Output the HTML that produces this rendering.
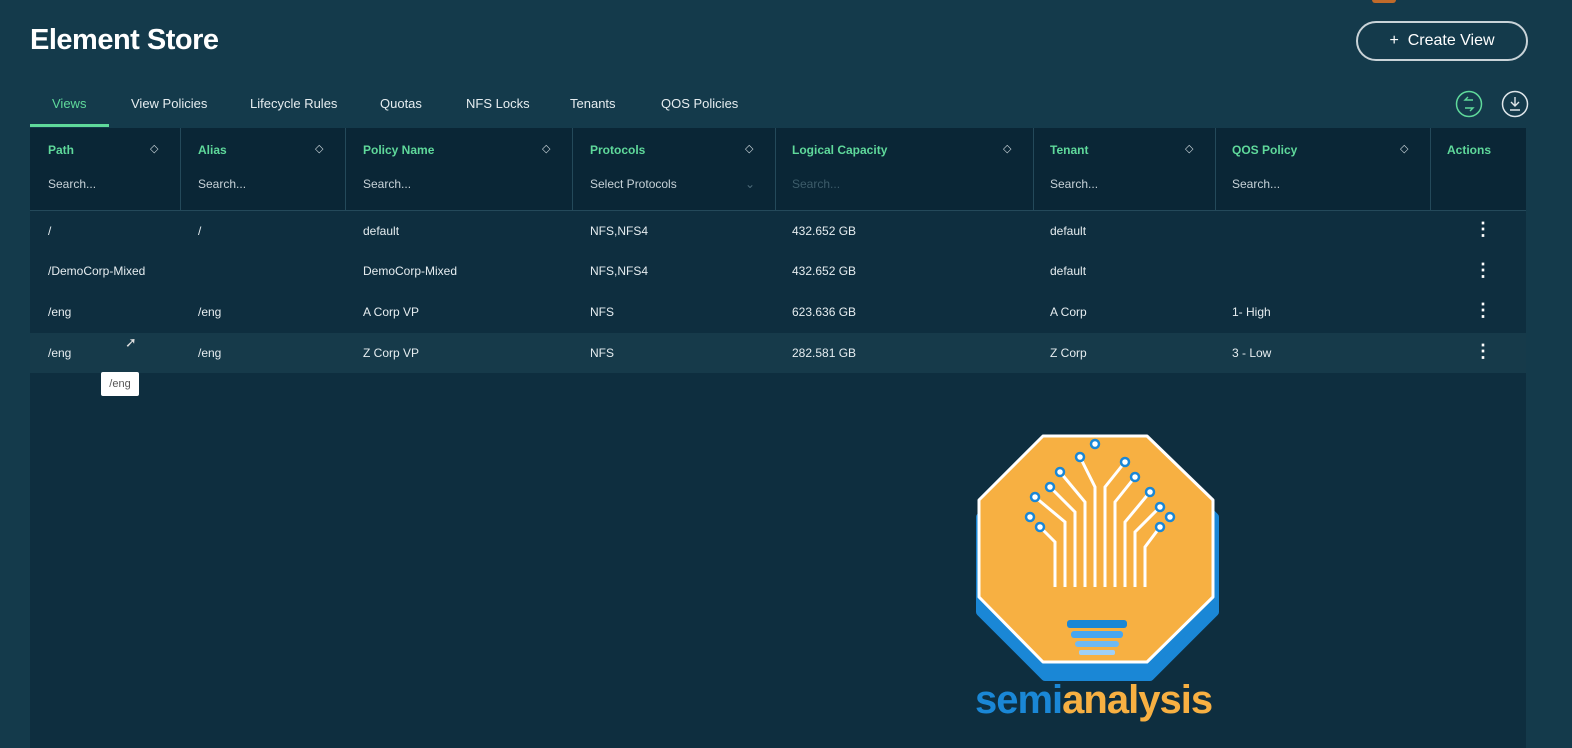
<!DOCTYPE html>
<html><head><style>
body{margin:0;width:1572px;height:746px;overflow:hidden;background:#143a4b;font-family:"Liberation Sans",sans-serif;position:relative;color:#e6edf0}
.abs{position:absolute}
h1{position:absolute;left:30px;top:24px;margin:0;font-size:29px;font-weight:bold;color:#fff;letter-spacing:-0.5px}
.btn{left:1356px;top:21px;width:168px;height:36px;border:2px solid #c9d3d8;border-radius:20px;font-size:16px;color:#fff;text-align:center;line-height:36px}
.tab{top:96px;font-size:13px;color:#e6edf0}
.table{left:30px;top:128px;width:1496px;height:620px;background:#0e2e3f}
.hdr{left:30px;top:128px;width:1496px;height:82px;background:#0a2636;border-bottom:1px solid #24495a}
.col{top:128px;height:82px;border-left:1px solid #24495a}
.ht{top:143px;font-size:12px;font-weight:bold;color:#5fd99b}
.sr{top:177px;font-size:12px;color:#c7d2d8}
.sort{top:142px;font-size:11px;color:#c7d2d8}
.cell{font-size:12px;color:#e6edf0}
.dot{font-size:18px;font-weight:bold;color:#fff}
</style></head><body>
<div class="abs" style="left:1372px;top:0;width:24px;height:3px;background:#c06a2a;border-radius:0 0 4px 4px"></div>
<h1>Element Store</h1>
<div class="abs btn">+&nbsp;&nbsp;Create View</div>
<div class="abs tab" style="left:52px;color:#5fd99b">Views</div>
<div class="abs" style="left:30px;top:124px;width:79px;height:3px;background:#5fd99b"></div>
<div class="abs tab" style="left:131px">View Policies</div>
<div class="abs tab" style="left:250px">Lifecycle Rules</div>
<div class="abs tab" style="left:380px">Quotas</div>
<div class="abs tab" style="left:466px">NFS Locks</div>
<div class="abs tab" style="left:570px">Tenants</div>
<div class="abs tab" style="left:661px">QOS Policies</div>
<svg class="abs" style="left:1454px;top:89px" width="30" height="30"><circle cx="15" cy="15" r="12.5" fill="none" stroke="#5fd99b" stroke-width="1.5"/><path d="M19 11H11l3-3M11 19h8l-3 3" fill="none" stroke="#5fd99b" stroke-width="1.4"/></svg>
<svg class="abs" style="left:1500px;top:89px" width="30" height="30"><circle cx="15" cy="15" r="12.5" fill="none" stroke="#dfe6ea" stroke-width="1.5"/><path d="M15 8v9M11 13l4 4 4-4M10 21h10" fill="none" stroke="#dfe6ea" stroke-width="1.4"/></svg>
<div class="abs table"></div>
<div class="abs hdr"></div>
<div class="abs col" style="left:180px"></div><div class="abs col" style="left:345px"></div><div class="abs col" style="left:572px"></div><div class="abs col" style="left:775px"></div><div class="abs col" style="left:1033px"></div><div class="abs col" style="left:1215px"></div><div class="abs col" style="left:1430px"></div>
<div class="abs ht" style="left:48px">Path</div><div class="abs sort" style="left:150px">◇</div><div class="abs sr" style="left:48px">Search...</div>
<div class="abs ht" style="left:198px">Alias</div><div class="abs sort" style="left:315px">◇</div><div class="abs sr" style="left:198px">Search...</div>
<div class="abs ht" style="left:363px">Policy Name</div><div class="abs sort" style="left:542px">◇</div><div class="abs sr" style="left:363px">Search...</div>
<div class="abs ht" style="left:590px">Protocols</div><div class="abs sort" style="left:745px">◇</div><div class="abs sr" style="left:590px">Select Protocols</div><div class="abs sr" style="left:745px;color:#4c6a78">⌄</div>
<div class="abs ht" style="left:792px">Logical Capacity</div><div class="abs sort" style="left:1003px">◇</div><div class="abs sr" style="left:792px;color:#3d5c6a">Search...</div>
<div class="abs ht" style="left:1050px">Tenant</div><div class="abs sort" style="left:1185px">◇</div><div class="abs sr" style="left:1050px">Search...</div>
<div class="abs ht" style="left:1232px">QOS Policy</div><div class="abs sort" style="left:1400px">◇</div><div class="abs sr" style="left:1232px">Search...</div>
<div class="abs ht" style="left:1447px">Actions</div>
<div class="abs" style="left:30px;top:333px;width:1496px;height:40px;background:#163a4a"></div>
<div class="abs cell" style="left:48px;top:224px">/</div><div class="abs cell" style="left:198px;top:224px">/</div><div class="abs cell" style="left:363px;top:224px">default</div><div class="abs cell" style="left:590px;top:224px">NFS,NFS4</div><div class="abs cell" style="left:792px;top:224px">432.652 GB</div><div class="abs cell" style="left:1050px;top:224px">default</div><div class="abs dot" style="left:1474px;top:219px">⋮</div>
<div class="abs cell" style="left:48px;top:264px">/DemoCorp-Mixed</div><div class="abs cell" style="left:363px;top:264px">DemoCorp-Mixed</div><div class="abs cell" style="left:590px;top:264px">NFS,NFS4</div><div class="abs cell" style="left:792px;top:264px">432.652 GB</div><div class="abs cell" style="left:1050px;top:264px">default</div><div class="abs dot" style="left:1474px;top:260px">⋮</div>
<div class="abs cell" style="left:48px;top:305px">/eng</div><div class="abs cell" style="left:198px;top:305px">/eng</div><div class="abs cell" style="left:363px;top:305px">A Corp VP</div><div class="abs cell" style="left:590px;top:305px">NFS</div><div class="abs cell" style="left:792px;top:305px">623.636 GB</div><div class="abs cell" style="left:1050px;top:305px">A Corp</div><div class="abs cell" style="left:1232px;top:305px">1- High</div><div class="abs dot" style="left:1474px;top:300px">⋮</div>
<div class="abs cell" style="left:48px;top:346px">/eng</div><div class="abs cell" style="left:198px;top:346px">/eng</div><div class="abs cell" style="left:363px;top:346px">Z Corp VP</div><div class="abs cell" style="left:590px;top:346px">NFS</div><div class="abs cell" style="left:792px;top:346px">282.581 GB</div><div class="abs cell" style="left:1050px;top:346px">Z Corp</div><div class="abs cell" style="left:1232px;top:346px">3 - Low</div><div class="abs dot" style="left:1474px;top:341px">⋮</div>
<div class="abs" style="left:125px;top:334px;font-size:14px;color:#ddd">➚</div>
<div class="abs" style="left:101px;top:372px;width:38px;height:24px;background:#fff;border-radius:2px;color:#555;font-size:11px;line-height:24px;text-align:center">/eng</div>
<svg class="abs" style="left:975px;top:432px" width="245" height="300" viewBox="0 0 245 300">
<polygon points="70,20 175,20 240,85 240,180 175,245 70,245 5,180 5,85" fill="#1a87d6" stroke="#1a87d6" stroke-width="8" stroke-linejoin="round"/>
<polygon points="68,4 172,4 238,68 238,165 172,230 68,230 4,165 4,68" fill="#f7b042" stroke="#fff" stroke-width="3" stroke-linejoin="round"/>
<g stroke="#fff" stroke-width="3" fill="none">
<path d="M100 155V80L75 55M110 155V70L85 40M120 155V55L105 25M130 155V55L150 30M140 155V70L160 45M150 155V90L175 60M160 155V100L185 75M90 155V90L60 65M80 155V110L65 95M170 155V115L185 95"/>
</g>
<g fill="#fff" stroke="#1a87d6" stroke-width="2.5">
<circle cx="75" cy="55" r="4"/><circle cx="85" cy="40" r="4"/><circle cx="105" cy="25" r="4"/><circle cx="150" cy="30" r="4"/><circle cx="160" cy="45" r="4"/><circle cx="175" cy="60" r="4"/><circle cx="185" cy="75" r="4"/><circle cx="60" cy="65" r="4"/><circle cx="65" cy="95" r="4"/><circle cx="185" cy="95" r="4"/><circle cx="120" cy="12" r="4"/><circle cx="55" cy="85" r="4"/><circle cx="195" cy="85" r="4"/>
</g>
<rect x="92" y="188" width="60" height="8" rx="3" fill="#1a87d6"/>
<rect x="96" y="199" width="52" height="7" rx="3" fill="#46a6f0"/>
<rect x="100" y="209" width="44" height="6" rx="3" fill="#6fb9f2"/>
<rect x="104" y="218" width="36" height="5" rx="2" fill="#9fd0f7"/>
</svg>
<div class="abs" style="left:975px;top:678px;font-size:40px;font-weight:bold;letter-spacing:-1px;font-family:'Liberation Sans',sans-serif;line-height:44px"><span style="color:#1a87d6">semi</span><span style="color:#f7b042">analysis</span></div>
</body></html>
